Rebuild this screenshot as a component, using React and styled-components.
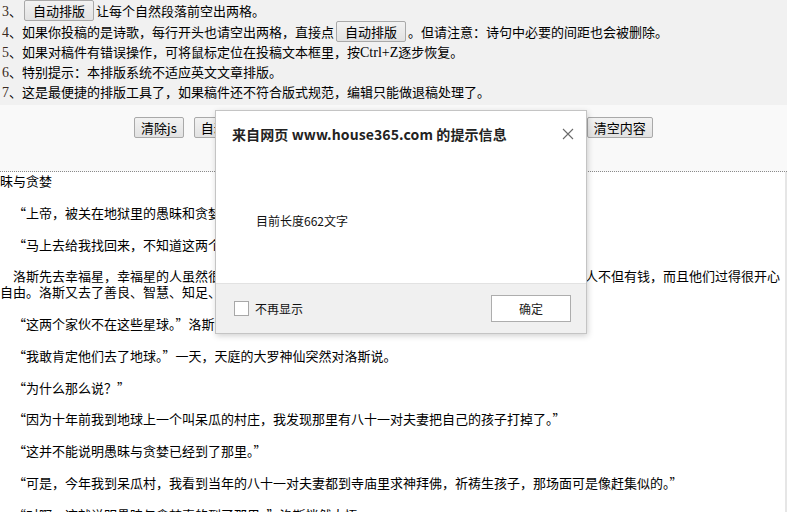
import React from 'react'
import styled, { createGlobalStyle } from 'styled-components'

const GlobalStyle = createGlobalStyle`
  html, body {
    margin: 0;
    padding: 0;
    background: #fff;
    overflow: hidden;
  }
  body {
    font-family: "Noto Sans CJK SC", "Liberation Sans", sans-serif;
  }
`

const Page = styled.div`
  position: relative;
  width: 787px;
  height: 512px;
  overflow: hidden;
  background: #fff;
  color: #000;
`

const Notes = styled.div`
  background: #f1f1f1;
  padding: 0 0 3px 2px;
  font-size: 13px;
`

const NoteRow = styled.div`
  height: ${p => (p.$tall ? 21 : 20)}px;
  line-height: ${p => (p.$tall ? 21 : 20)}px;
  white-space: nowrap;
`

const Num = styled.span`
  font-family: "Liberation Serif", serif;
  font-size: 14px;
  color: #3a2a20;
`

const Latin = styled.span`
  font-family: "Liberation Serif", serif;
  font-size: 14px;
`

const Btn = styled.button`
  vertical-align: top;
  height: 21px;
  margin: ${p => (p.$inline ? '0 2px' : '0')};
  padding: 0 ${p => (p.$inline ? 8 : 6)}px;
  font-family: "Noto Sans CJK SC", "Liberation Sans", sans-serif;
  font-size: 13px;
  line-height: 19px;
  color: #000;
  background: linear-gradient(#f2f2f2, #e2e2e2);
  border: 1px solid #a9a9a9;
  border-radius: 2px;
`

const Toolbar = styled.div`
  display: flex;
  justify-content: center;
  align-items: flex-start;
  gap: 10px;
  height: 54px;
  padding-top: 12px;
  background: #f9f9f9;
  border-bottom: 1px dotted #8a8a8a;
`

const Editor = styled.div`
  height: 340px;
  padding-top: 1px;
  border-right: 2px solid #e6e6e6;
  font-size: 13px;
  line-height: 15.9px;
  background: #fff;
  overflow: hidden;
`

const Para = styled.p`
  margin: 0 0 15.9px;
  text-indent: ${p => (p.$indent ? 13 : 0)}px;
  white-space: nowrap;
`

const Dialog = styled.div`
  position: absolute;
  left: 215px;
  top: 110px;
  width: 370px;
  height: 222px;
  display: flex;
  flex-direction: column;
  background: #fff;
  border: 1px solid #c4c4c4;
  box-shadow: 1px 2px 6px rgba(0, 0, 0, 0.18);
`

const DialogHead = styled.div`
  display: flex;
  justify-content: space-between;
  align-items: flex-start;
  height: 46px;
  padding: 14px 12px 0 16px;
  box-sizing: border-box;
`

const DialogTitle = styled.div`
  font-size: 14px;
  font-weight: bold;
  line-height: 18px;
  letter-spacing: 0.1px;
  color: #222;
`

const Close = styled.span`
  display: flex;
  margin-top: 3px;
`

const DialogBody = styled.div`
  flex: 1;
  display: flex;
  align-items: center;
  padding-left: 40px;
  font-size: 12px;
  color: #111;
`

const DialogFoot = styled.div`
  display: flex;
  align-items: center;
  justify-content: space-between;
  height: 49px;
  padding: 0 15px 0 18px;
  background: #f0f0f0;
  border-top: 1px solid #e2e2e2;
`

const Check = styled.label`
  display: flex;
  align-items: center;
  gap: 6px;
  font-size: 12px;
  color: #111;
`

const Box = styled.span`
  width: 13px;
  height: 13px;
  background: #fff;
  border: 1px solid #a8a8a8;
`

const OkBtn = styled.button`
  width: 80px;
  height: 27px;
  font-family: "Noto Sans CJK SC", "Liberation Sans", sans-serif;
  font-size: 12px;
  color: #222;
  background: #fff;
  border: 1px solid #adadad;
`

const paras = [
  { text: '昧与贪婪' },
  { indent: true, text: '“上帝，被关在地狱里的愚昧和贪婪逃跑了！”洛斯气喘吁吁地说。' },
  { indent: true, text: '“马上去给我找回来，不知道这两个家伙又要给人间带来多少灾难。”上帝说。' },
  {
    indent: true,
    text: '洛斯先去幸福星，幸福星的人虽然很富有，但是他们一点也不快乐。洛斯又去了金钱星，发现那里的人不但有钱，而且他们过得很开心',
    more: '自由。洛斯又去了善良、智慧、知足、勤劳、诚实等星球，都没有找到它们。',
  },
  { indent: true, text: '“这两个家伙不在这些星球。”洛斯说道。' },
  { indent: true, text: '“我敢肯定他们去了地球。”一天，天庭的大罗神仙突然对洛斯说。' },
  { indent: true, text: '“为什么那么说？”' },
  { indent: true, text: '“因为十年前我到地球上一个叫呆瓜的村庄，我发现那里有八十一对夫妻把自己的孩子打掉了。”' },
  { indent: true, text: '“这并不能说明愚昧与贪婪已经到了那里。”' },
  { indent: true, text: '“可是，今年我到呆瓜村，我看到当年的八十一对夫妻都到寺庙里求神拜佛，祈祷生孩子，那场面可是像赶集似的。”' },
  { indent: true, text: '“对啊，这就说明愚昧与贪婪真的到了那里。”洛斯恍然大悟。' },
]

const tools = ['清除js', '自动排版', '半角转换', '删除空行', '段首空两格', '统计字数', '清空内容']

const App = () => {
  return (
    <Page>
      <GlobalStyle />
      <Notes>
        <NoteRow $tall>
          <Num>3</Num>、<Btn $inline>自动排版</Btn>让每个自然段落前空出两格。
        </NoteRow>
        <NoteRow $tall>
          <Num>4</Num>、如果你投稿的是诗歌，每行开头也请空出两格，直接点<Btn $inline>自动排版</Btn>。但请注意：诗句中必要的间距也会被删除。
        </NoteRow>
        <NoteRow>
          <Num>5</Num>、如果对稿件有错误操作，可将鼠标定位在投稿文本框里，按<Latin>Ctrl+Z</Latin>逐步恢复。
        </NoteRow>
        <NoteRow>
          <Num>6</Num>、特别提示：本排版系统不适应英文文章排版。
        </NoteRow>
        <NoteRow>
          <Num>7</Num>、这是最便捷的排版工具了，如果稿件还不符合版式规范，编辑只能做退稿处理了。
        </NoteRow>
      </Notes>

      <Toolbar>
        {tools.map(t => (
          <Btn key={t}>{t}</Btn>
        ))}
      </Toolbar>

      <Editor>
        {paras.map((p, i) => (
          <Para key={i} $indent={p.indent}>
            {p.text}
            {p.more && (
              <>
                <br />
                {p.more}
              </>
            )}
          </Para>
        ))}
      </Editor>

      <Dialog>
        <DialogHead>
          <DialogTitle>来自网页 www.house365.com 的提示信息</DialogTitle>
          <Close>
            <svg width="12" height="12" viewBox="0 0 12 12">
              <path d="M1 1L11 11M11 1L1 11" stroke="#6a6a6a" strokeWidth="1.1" fill="none" />
            </svg>
          </Close>
        </DialogHead>
        <DialogBody>目前长度662文字</DialogBody>
        <DialogFoot>
          <Check>
            <Box />
            不再显示
          </Check>
          <OkBtn>确定</OkBtn>
        </DialogFoot>
      </Dialog>
    </Page>
  )
}

export default App
